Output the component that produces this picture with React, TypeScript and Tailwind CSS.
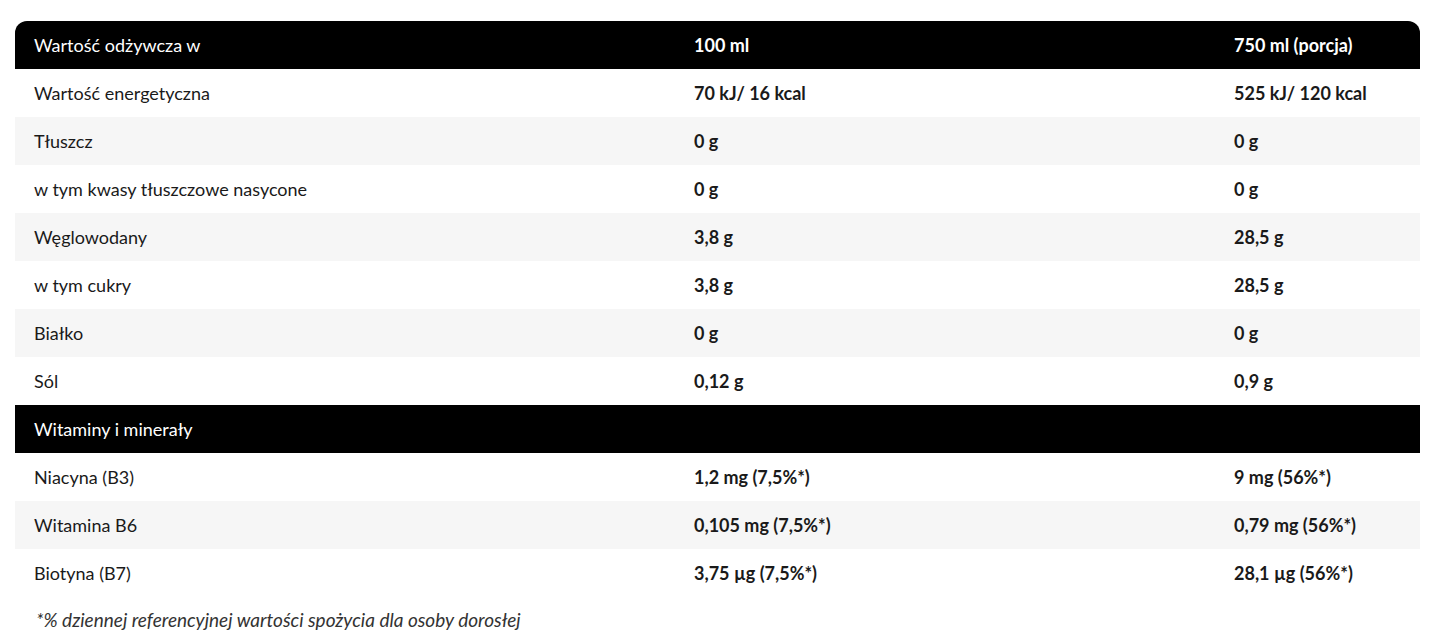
const rows: [string, string, string][] = [
  ["Wartość energetyczna", "70 kJ/ 16 kcal", "525 kJ/ 120 kcal"],
  ["Tłuszcz", "0 g", "0 g"],
  ["w tym kwasy tłuszczowe nasycone", "0 g", "0 g"],
  ["Węglowodany", "3,8 g", "28,5 g"],
  ["w tym cukry", "3,8 g", "28,5 g"],
  ["Białko", "0 g", "0 g"],
  ["Sól", "0,12 g", "0,9 g"],
];

const vitamins: [string, string, string][] = [
  ["Niacyna (B3)", "1,2 mg (7,5%*)", "9 mg (56%*)"],
  ["Witamina B6", "0,105 mg (7,5%*)", "0,79 mg (56%*)"],
  ["Biotyna (B7)", "3,75 µg (7,5%*)", "28,1 µg (56%*)"],
];

function Row({ cells, shaded }: { cells: [string, string, string]; shaded: boolean }) {
  return (
    <div className={`grid grid-cols-[660px_540px_1fr] h-12 items-center ${shaded ? "bg-[#f6f6f6]" : "bg-white"}`}>
      <div className="pl-[19px]">{cells[0]}</div>
      <div className="pl-[19px] font-bold">{cells[1]}</div>
      <div className="pl-[19px] font-bold">{cells[2]}</div>
    </div>
  );
}

export default function App() {
  return (
    <div className="bg-white min-h-screen pt-[21px] px-[15px] text-[18px] text-[#1a1a1a]" style={{ fontFamily: "Lato, 'Noto Sans', sans-serif" }}>
      <div className="w-[1405px]">
        <div className="grid grid-cols-[660px_540px_1fr] h-12 items-center bg-black text-white rounded-t-xl">
          <div className="pl-[19px]">Wartość odżywcza w</div>
          <div className="pl-[19px] font-bold">100 ml</div>
          <div className="pl-[19px] font-bold">750 ml (porcja)</div>
        </div>
        {rows.map((r, i) => (
          <Row key={r[0]} cells={r} shaded={i % 2 === 1} />
        ))}
        <div className="h-12 flex items-center bg-black text-white pl-[19px]">Witaminy i minerały</div>
        {vitamins.map((r, i) => (
          <Row key={r[0]} cells={r} shaded={i % 2 === 1} />
        ))}
        <p className="italic pl-[21px] pt-[9px] text-[19px] text-[#333]">*% dziennej referencyjnej wartości spożycia dla osoby dorosłej</p>
      </div>
    </div>
  );
}
